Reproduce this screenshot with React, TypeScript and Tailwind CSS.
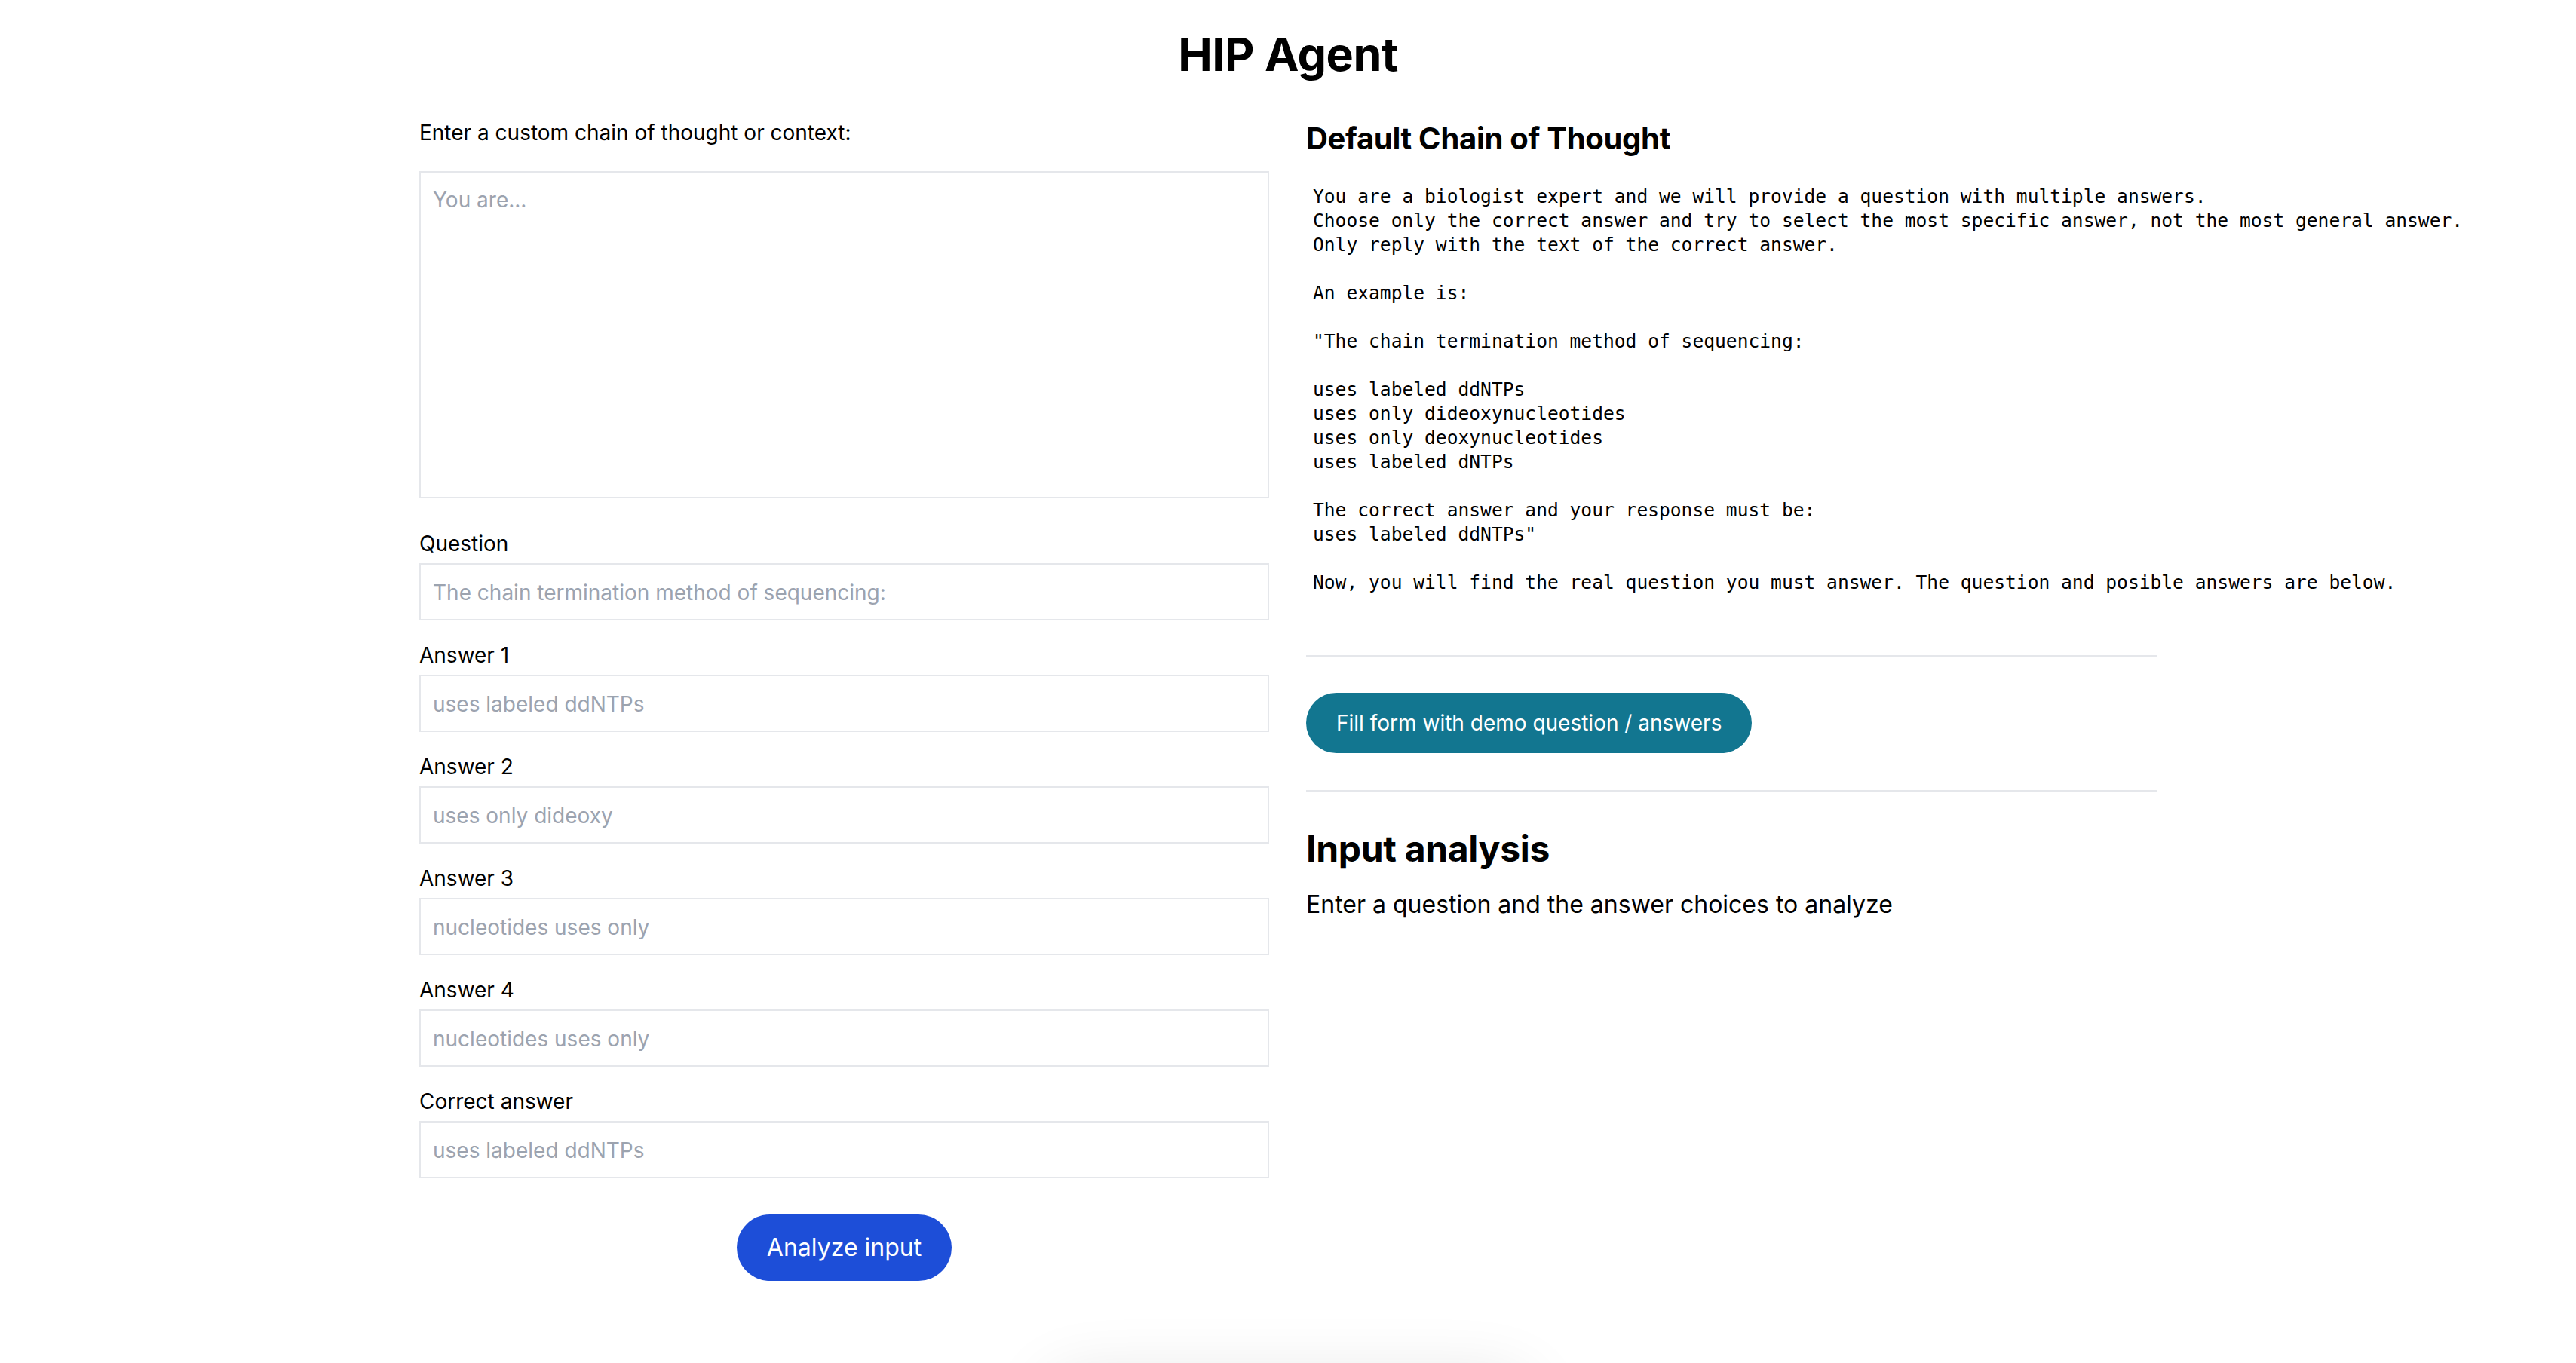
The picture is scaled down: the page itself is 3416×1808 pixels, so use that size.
import { useState } from 'react'

const DEFAULT_COT = `You are a biologist expert and we will provide a question with multiple answers.
Choose only the correct answer and try to select the most specific answer, not the most general answer.
Only reply with the text of the correct answer.

An example is:

"The chain termination method of sequencing:

uses labeled ddNTPs
uses only dideoxynucleotides
uses only deoxynucleotides
uses labeled dNTPs

The correct answer and your response must be:
uses labeled ddNTPs"

Now, you will find the real question you must answer. The question and posible answers are below.`

const fields = [
  { key: 'question', label: 'Question', placeholder: 'The chain termination method of sequencing:' },
  { key: 'a1', label: 'Answer 1', placeholder: 'uses labeled ddNTPs' },
  { key: 'a2', label: 'Answer 2', placeholder: 'uses only dideoxy' },
  { key: 'a3', label: 'Answer 3', placeholder: 'nucleotides uses only' },
  { key: 'a4', label: 'Answer 4', placeholder: 'nucleotides uses only' },
  { key: 'correct', label: 'Correct answer', placeholder: 'uses labeled ddNTPs' },
]

export default function App() {
  const [cot, setCot] = useState('')
  const [values, setValues] = useState<Record<string, string>>({})

  return (
    <div className="min-h-screen bg-white text-black font-['Inter',sans-serif]">
      <div className="mx-auto w-[2304px]">
        <h1 className="pt-[32px] text-center text-[61px] font-bold leading-[80px] tracking-[-0.5px]">HIP Agent</h1>

        <div className="mt-[44px] grid grid-cols-[1127px_1128px] gap-x-[49px]">
          {/* Left: form */}
          <div className="min-w-0 flex flex-col">
            <label className="text-[28px] leading-[40px]">Enter a custom chain of thought or context:</label>
            <textarea
              value={cot}
              onChange={e => setCot(e.target.value)}
              placeholder="You are..."
              className="mt-[31px] h-[434px] resize-none border-2 border-[#e5e7eb] px-4 py-4 text-[28px] leading-[40px] outline-none placeholder:text-[#9ca3af]"
            />

            <div className="mt-[40px] flex flex-col gap-[26px]">
              {fields.map(f => (
                <div key={f.key} className="flex flex-col">
                  <label className="text-[28px] leading-[40px]">{f.label}</label>
                  <input
                    type="text"
                    value={values[f.key] || ''}
                    onChange={e => setValues({ ...values, [f.key]: e.target.value })}
                    placeholder={f.placeholder}
                    className="mt-[6px] h-[76px] border-2 border-[#e5e7eb] px-4 pt-[2px] text-[28px] leading-[40px] outline-none placeholder:text-[#9ca3af]"
                  />
                </div>
              ))}
            </div>

            <div className="mt-[48px] flex justify-center">
              <button className="h-[88px] rounded-full bg-[#1d4ed8] px-10 text-[32px] leading-[48px] text-white">
                Analyze input
              </button>
            </div>
          </div>

          {/* Right: default chain + analysis */}
          <div className="min-w-0 flex flex-col">
            <h2 className="text-[40px] font-bold leading-[56px] tracking-[-0.3px]">Default Chain of Thought</h2>
            <pre className="mt-[33px] pl-[9px] whitespace-pre font-['DejaVu_Sans_Mono',monospace] text-[24.6px] leading-[32px]">
              {DEFAULT_COT}
            </pre>

            <div className="mt-[80px] border-t-2 border-[#e5e7eb]" />
            <div className="pt-[48px] pb-[49px]">
              <button
                onClick={() => setValues({
                  question: 'The chain termination method of sequencing:',
                  a1: 'uses labeled ddNTPs',
                  a2: 'uses only dideoxynucleotides',
                  a3: 'uses only deoxynucleotides',
                  a4: 'uses labeled dNTPs',
                  correct: 'uses labeled ddNTPs',
                })}
                className="h-[80px] rounded-full bg-[#127690] px-10 text-[28px] leading-[40px] text-white"
              >
                Fill form with demo question / answers
              </button>
            </div>
            <div className="border-t-2 border-[#e5e7eb]" />

            <h2 className="mt-[44px] text-[48px] font-bold leading-[64px] tracking-[-0.3px]">Input analysis</h2>
            <p className="mt-[18px] text-[32px] leading-[48px]">Enter a question and the answer choices to analyze</p>
          </div>
        </div>
      </div>

      {/* floating panel just below the fold, only its shadow shows */}
      <div className="fixed left-1/2 top-[1830px] h-[80px] w-[640px] -translate-x-1/2 rounded-[40px] bg-white shadow-[0_0_90px_rgba(0,0,0,0.12)]" />
    </div>
  )
}
